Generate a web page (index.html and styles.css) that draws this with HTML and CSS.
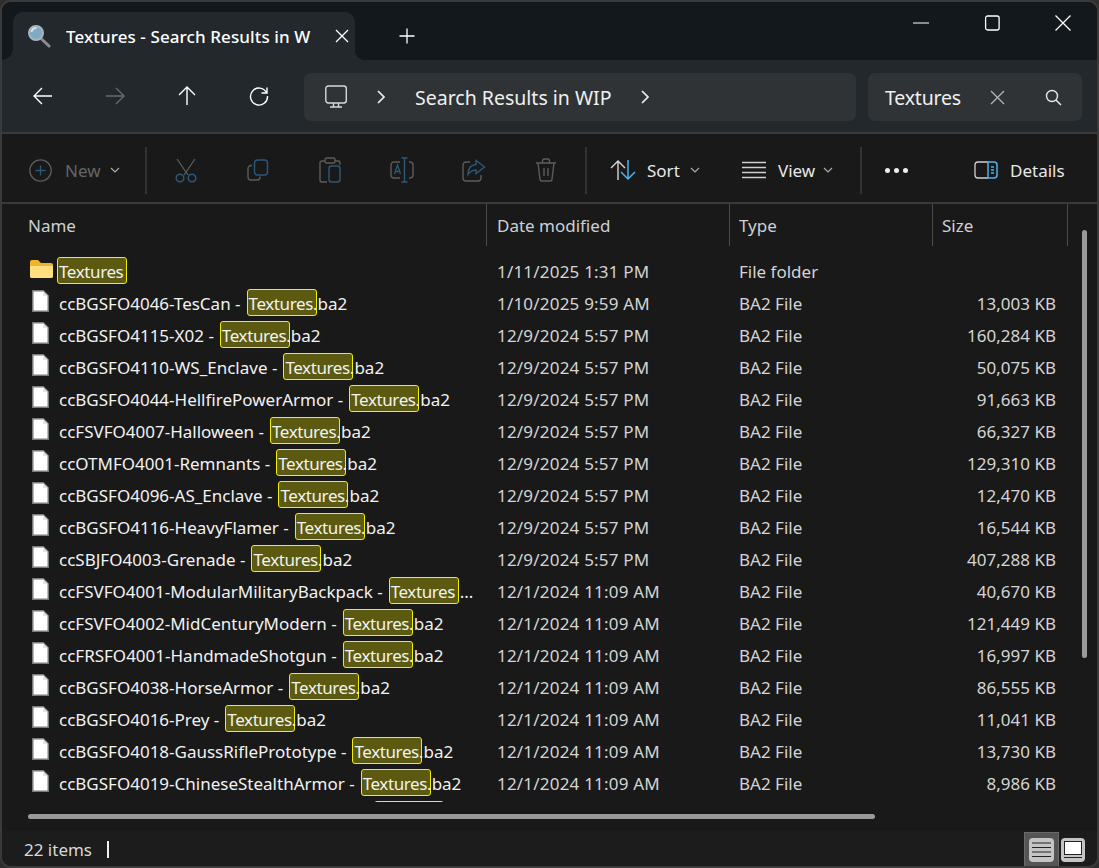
FILE: index.html
```html
<!DOCTYPE html>
<html lang="en">
<head>
    <meta charset="UTF-8">
    <meta name="viewport" content="width=device-width, initial-scale=1.0">
    <title>Textures - Search Results in WIP</title>
    <link rel="stylesheet" href="styles.css">
</head>
<body>
    <svg class="sprites" width="0" height="0">
        <symbol id="file" viewBox="0 0 17 22">
            <path d="M.75.75h10.5l5 5v15.5H.75z" fill="#fff" stroke="#7a7a7a" stroke-width="1.5"/>
            <path d="M11 1v5h5" fill="#e4e4e4"/>
        </symbol>
        <symbol id="chev" viewBox="0 0 10 6">
            <path d="M1 1l4 4 4-4" fill="none" stroke="currentColor" stroke-width="1.2"/>
        </symbol>
        <symbol id="nav-chev" viewBox="0 0 10 16">
            <path d="M2 2l6 6-6 6" fill="none" stroke="currentColor" stroke-width="1.7"/>
        </symbol>
    </svg>

    <div class="window">
        <!-- Title bar with the tab -->
        <div class="titlebar">
            <div class="tab">
                <svg class="tab-icon" width="24" height="24" viewBox="0 0 24 24">
                    <path d="M13.5 14l8.5 8" stroke="#8d8d8d" stroke-width="3" stroke-linecap="round"/>
                    <circle cx="9" cy="9" r="7" fill="#7fa9c4" stroke="#a9b4bb" stroke-width="2"/>
                    <path d="M4.5 8a5 5 0 0 1 5-4" fill="none" stroke="#cfe3ef" stroke-width="2"/>
                </svg>
                <span class="tab-title">Textures - Search Results in W</span>
                <svg class="tab-close" width="14" height="14" viewBox="0 0 14 14">
                    <path d="M1 1l12 12M13 1L1 13" stroke="#fff" stroke-width="1.3"/>
                </svg>
            </div>
            <svg class="tab-new" width="16" height="16" viewBox="0 0 16 16">
                <path d="M8 .5v15M.5 8h15" stroke="#fff" stroke-width="1.3"/>
            </svg>
            <div class="win-controls">
                <svg width="16" height="16" viewBox="0 0 16 16"><path d="M0 8h16" stroke="#fff" stroke-width="1.2"/></svg>
                <svg width="16" height="16" viewBox="0 0 16 16"><rect x="1.6" y="1" width="13.5" height="14" rx="2" fill="none" stroke="#fff" stroke-width="1.3"/></svg>
                <svg width="16" height="16" viewBox="0 0 16 16"><path d="M.5.5l15 15M15.500.5l-15 15" stroke="#fff" stroke-width="1.3"/></svg>
            </div>
        </div>

        <!-- Navigation, address and search -->
        <div class="navbar">
            <div class="nav-buttons">
                <svg width="20" height="20" viewBox="0 0 20 20"><path d="M19 10H1.500M9 2l-8 8 8 8" fill="none" stroke="#fff" stroke-width="1.4"/></svg>
                <svg width="20" height="20" viewBox="0 0 20 20"><path d="M1 10h17.500M11 2l8 8-8 8" fill="none" stroke="#666a6d" stroke-width="1.4"/></svg>
                <svg width="20" height="20" viewBox="0 0 20 20"><path d="M10 19V1.500M2 9l8-8 8 8" fill="none" stroke="#fff" stroke-width="1.4"/></svg>
                <svg width="20" height="20" viewBox="0 0 20 20"><path d="M17.500 6.500A8.500 8.500 0 1 0 18.500 10M18 1.500v5.500h-5.500" fill="none" stroke="#fff" stroke-width="1.4"/></svg>
            </div>
            <div class="address">
                <svg class="pc-icon" width="24" height="24" viewBox="0 0 24 24">
                    <rect x="1.800" y="1" width="20.500" height="17" rx="2.500" fill="none" stroke="#d8d8d8" stroke-width="1.4"/>
                    <path d="M9.500 18v3.500M14.500 18v3.500M6 22h12" fill="none" stroke="#d8d8d8" stroke-width="1.400"/>
                </svg>
                <svg class="crumb-chev" width="10" height="16"><use href="#nav-chev"/></svg>
                <span class="crumb">Search Results in WIP</span>
                <svg class="crumb-chev" width="10" height="16"><use href="#nav-chev"/></svg>
            </div>
            <div class="search">
                <span class="search-text">Textures</span>
                <svg class="search-clear" width="15" height="15" viewBox="0 0 15 15"><path d="M1 1l13 13M14 1L1 14" stroke="#b4b6b8" stroke-width="1.3"/></svg>
                <svg width="17" height="17" viewBox="0 0 17 17"><circle cx="7" cy="7" r="5.500" fill="none" stroke="#e8e8e8" stroke-width="1.400"/><path d="M11 11l5 5" stroke="#e8e8e8" stroke-width="1.500"/></svg>
            </div>
        </div>

        <!-- Command bar -->
        <div class="cmdbar">
            <div class="cmd-new">
                <svg width="23" height="23" viewBox="0 0 23 23"><circle cx="11.500" cy="11.500" r="10.700" fill="none" stroke="#5c5c5c" stroke-width="1.300"/><path d="M11.500 6.500v10M6.500 11.500h10" stroke="#2b5a78" stroke-width="1.300"/></svg>
                <span class="dim">New</span>
                <svg class="chev dim" width="10" height="6"><use href="#chev"/></svg>
            </div>
            <div class="divider divider-new"></div>
            <div class="cmd-icon">
                <svg width="24" height="25" viewBox="0 0 24 25"><path d="M3 1l11 16M21 1L10 17" fill="none" stroke="#5c5c5c" stroke-width="1.300"/><circle cx="6" cy="20" r="3.800" fill="none" stroke="#2b5a78" stroke-width="1.500"/><circle cx="18" cy="20" r="3.800" fill="none" stroke="#2b5a78" stroke-width="1.500"/></svg>
            </div>
            <div class="cmd-icon">
                <svg width="22" height="22" viewBox="0 0 22 22"><rect x="7.500" y="1" width="13" height="15" rx="3" fill="none" stroke="#2b5a78" stroke-width="1.400"/><path d="M5 6.500H4a3 3 0 0 0-3 3V18a3 3 0 0 0 3 3h6a3 3 0 0 0 3-3v-.5" fill="none" stroke="#5c5c5c" stroke-width="1.400"/></svg>
            </div>
            <div class="cmd-icon">
                <svg width="22" height="26" viewBox="0 0 22 26"><path d="M6 4H3a2 2 0 0 0-2 2v17a2 2 0 0 0 2 2h5M16 4h3a2 2 0 0 1 2 2v2" fill="none" stroke="#5c5c5c" stroke-width="1.400"/><rect x="6" y="1" width="10" height="5" rx="1.500" fill="none" stroke="#5c5c5c" stroke-width="1.400"/><rect x="10" y="9" width="11" height="16" rx="2.500" fill="none" stroke="#2b5a78" stroke-width="1.400"/></svg>
            </div>
            <div class="cmd-icon">
                <svg width="24" height="26" viewBox="0 0 24 26"><path d="M10 5H4a3 3 0 0 0-3 3v10a3 3 0 0 0 3 3h6M19 5h1a3 3 0 0 1 3 3v10a3 3 0 0 1-3 3h-1" fill="none" stroke="#5c5c5c" stroke-width="1.400"/><path d="M14.500 1v24M11.500 1h6M11.500 25h6" fill="none" stroke="#2b5a78" stroke-width="1.400"/><path d="M4.500 17l3-9 3 9M5.500 14.500h4" fill="none" stroke="#2b5a78" stroke-width="1.300"/></svg>
            </div>
            <div class="cmd-icon">
                <svg width="24" height="23" viewBox="0 0 24 23"><path d="M8 3H4a3 3 0 0 0-3 3v13a3 3 0 0 0 3 3h12a3 3 0 0 0 3-3v-3" fill="none" stroke="#5c5c5c" stroke-width="1.400"/><path d="M14 1.500L22.500 8 14 14.500V11c-4 0-6 1.500-8 4.500 0-6 3-9.500 8-10z" fill="none" stroke="#2b5a78" stroke-width="1.400"/></svg>
            </div>
            <div class="cmd-icon">
                <svg width="22" height="24" viewBox="0 0 22 24"><path d="M1 5h20M7.500 5V3a2 2 0 0 1 2-2h3a2 2 0 0 1 2 2v2M3 5l2 16a2 2 0 0 0 2 2h8a2 2 0 0 0 2-2l2-16M9 10v8M13 10v8" fill="none" stroke="#5c5c5c" stroke-width="1.400"/></svg>
            </div>
            <div class="divider divider-delete"></div>
            <div class="cmd-sort">
                <svg width="26" height="22" viewBox="0 0 26 22"><path d="M8 21V2M1 9l7-7 7 7" fill="none" stroke="#d8d8d8" stroke-width="1.400"/><path d="M18 1v19M11 13l7 7 7-7" fill="none" stroke="#4fb3ea" stroke-width="1.500"/></svg>
                <span>Sort</span>
                <svg class="chev" width="10" height="6"><use href="#chev"/></svg>
            </div>
            <div class="cmd-view">
                <svg width="24" height="18" viewBox="0 0 24 18"><path d="M0 1.500h24M0 6.500h24M0 11.500h24M0 16.500h24" stroke="#d0d0d0" stroke-width="1.300"/></svg>
                <span>View</span>
                <svg class="chev" width="10" height="6"><use href="#chev"/></svg>
            </div>
            <div class="divider"></div>
            <div class="cmd-more"><i></i><i></i><i></i></div>
            <div class="cmd-details">
                <svg width="24" height="18" viewBox="0 0 24 18"><path d="M14 1H4a3 3 0 0 0-3 3v10a3 3 0 0 0 3 3h10" fill="none" stroke="#d0d0d0" stroke-width="1.300"/><path d="M14 1h6a3 3 0 0 1 3 3v10a3 3 0 0 1-3 3h-6z" fill="none" stroke="#4fb3ea" stroke-width="1.500"/><path d="M17 6h3M17 9h3M17 12h3" stroke="#4fb3ea" stroke-width="1.300"/></svg>
                <span>Details</span>
            </div>
        </div>

        <!-- File list -->
        <div class="main">
            <div class="list-head">
                <div class="col-name">Name</div>
                <div class="col-date">Date modified</div>
                <div class="col-type">Type</div>
                <div class="col-size">Size</div>
            </div>
            <div class="list">
                <div class="row">
                    <div class="name">
                        <svg class="folder" width="23" height="18" viewBox="0 0 23 18">
                            <path d="M0 2a2 2 0 0 1 2-2h6l3 3h10a2 2 0 0 1 2 2v11a2 2 0 0 1-2 2H2a2 2 0 0 1-2-2z" fill="#f0b429"/>
                            <path d="M0 6h23v10a2 2 0 0 1-2 2H2a2 2 0 0 1-2-2z" fill="#ffdf80"/>
                        </svg>
                        <span class="hl">Textures</span>
                    </div>
                    <div class="date">1/11/2025 1:31 PM</div><div class="type">File folder</div><div class="size"></div>
                </div>
                <div class="row">
                    <div class="name"><svg class="file"><use href="#file"/></svg>ccBGSFO4046-TesCan -<span class="hl">Textures.</span>ba2</div>
                    <div class="date">1/10/2025 9:59 AM</div><div class="type">BA2 File</div><div class="size">13,003 KB</div>
                </div>
                <div class="row">
                    <div class="name"><svg class="file"><use href="#file"/></svg>ccBGSFO4115-X02 -<span class="hl">Textures.</span>ba2</div>
                    <div class="date">12/9/2024 5:57 PM</div><div class="type">BA2 File</div><div class="size">160,284 KB</div>
                </div>
                <div class="row">
                    <div class="name"><svg class="file"><use href="#file"/></svg>ccBGSFO4110-WS_Enclave -<span class="hl">Textures.</span>ba2</div>
                    <div class="date">12/9/2024 5:57 PM</div><div class="type">BA2 File</div><div class="size">50,075 KB</div>
                </div>
                <div class="row">
                    <div class="name"><svg class="file"><use href="#file"/></svg>ccBGSFO4044-HellfirePowerArmor -<span class="hl">Textures.</span>ba2</div>
                    <div class="date">12/9/2024 5:57 PM</div><div class="type">BA2 File</div><div class="size">91,663 KB</div>
                </div>
                <div class="row">
                    <div class="name"><svg class="file"><use href="#file"/></svg>ccFSVFO4007-Halloween -<span class="hl">Textures.</span>ba2</div>
                    <div class="date">12/9/2024 5:57 PM</div><div class="type">BA2 File</div><div class="size">66,327 KB</div>
                </div>
                <div class="row">
                    <div class="name"><svg class="file"><use href="#file"/></svg>ccOTMFO4001-Remnants -<span class="hl">Textures.</span>ba2</div>
                    <div class="date">12/9/2024 5:57 PM</div><div class="type">BA2 File</div><div class="size">129,310 KB</div>
                </div>
                <div class="row">
                    <div class="name"><svg class="file"><use href="#file"/></svg>ccBGSFO4096-AS_Enclave -<span class="hl">Textures.</span>ba2</div>
                    <div class="date">12/9/2024 5:57 PM</div><div class="type">BA2 File</div><div class="size">12,470 KB</div>
                </div>
                <div class="row">
                    <div class="name"><svg class="file"><use href="#file"/></svg>ccBGSFO4116-HeavyFlamer -<span class="hl">Textures.</span>ba2</div>
                    <div class="date">12/9/2024 5:57 PM</div><div class="type">BA2 File</div><div class="size">16,544 KB</div>
                </div>
                <div class="row">
                    <div class="name"><svg class="file"><use href="#file"/></svg>ccSBJFO4003-Grenade -<span class="hl">Textures.</span>ba2</div>
                    <div class="date">12/9/2024 5:57 PM</div><div class="type">BA2 File</div><div class="size">407,288 KB</div>
                </div>
                <div class="row">
                    <div class="name"><svg class="file"><use href="#file"/></svg>ccFSVFO4001-ModularMilitaryBackpack -<span class="hl">Textures</span>...</div>
                    <div class="date">12/1/2024 11:09 AM</div><div class="type">BA2 File</div><div class="size">40,670 KB</div>
                </div>
                <div class="row">
                    <div class="name"><svg class="file"><use href="#file"/></svg>ccFSVFO4002-MidCenturyModern -<span class="hl">Textures.</span>ba2</div>
                    <div class="date">12/1/2024 11:09 AM</div><div class="type">BA2 File</div><div class="size">121,449 KB</div>
                </div>
                <div class="row">
                    <div class="name"><svg class="file"><use href="#file"/></svg>ccFRSFO4001-HandmadeShotgun -<span class="hl">Textures.</span>ba2</div>
                    <div class="date">12/1/2024 11:09 AM</div><div class="type">BA2 File</div><div class="size">16,997 KB</div>
                </div>
                <div class="row">
                    <div class="name"><svg class="file"><use href="#file"/></svg>ccBGSFO4038-HorseArmor -<span class="hl">Textures.</span>ba2</div>
                    <div class="date">12/1/2024 11:09 AM</div><div class="type">BA2 File</div><div class="size">86,555 KB</div>
                </div>
                <div class="row">
                    <div class="name"><svg class="file"><use href="#file"/></svg>ccBGSFO4016-Prey -<span class="hl">Textures.</span>ba2</div>
                    <div class="date">12/1/2024 11:09 AM</div><div class="type">BA2 File</div><div class="size">11,041 KB</div>
                </div>
                <div class="row">
                    <div class="name"><svg class="file"><use href="#file"/></svg>ccBGSFO4018-GaussRiflePrototype -<span class="hl">Textures.</span>ba2</div>
                    <div class="date">12/1/2024 11:09 AM</div><div class="type">BA2 File</div><div class="size">13,730 KB</div>
                </div>
                <div class="row">
                    <div class="name"><svg class="file"><use href="#file"/></svg>ccBGSFO4019-ChineseStealthArmor -<span class="hl">Textures.</span>ba2</div>
                    <div class="date">12/1/2024 11:09 AM</div><div class="type">BA2 File</div><div class="size">8,986 KB</div>
                </div>
                <div class="row row-cut">
                    <div class="name"><svg class="file"><use href="#file"/></svg><span class="hl"></span></div>
                </div>
            </div>
            <div class="hscroll"></div>
            <div class="vscroll"></div>
        </div>

        <!-- Status bar -->
        <div class="statusbar">
            <span>22 items</span>
            <span class="status-caret"></span>
            <div class="view-toggle">
                <div class="toggle-btn active">
                    <svg width="25" height="24" viewBox="0 0 25 24"><rect width="25" height="24" rx="4" fill="#c4c4c4"/><path d="M3 5h19M3 9.500h19M3 14h19M3 18.500h19" stroke="#222" stroke-width="1.200"/></svg>
                </div>
                <div class="toggle-btn">
                    <svg width="24" height="24" viewBox="0 0 24 24"><rect width="24" height="24" rx="4" fill="#c4c4c4"/><rect x="3.500" y="3.500" width="17" height="13" fill="#fff" stroke="#222"/><path d="M3 19.500h18" stroke="#222" stroke-width="1.200"/></svg>
                </div>
            </div>
        </div>
    </div>
</body>
</html>
```

FILE: styles.css
```css
* {
    box-sizing: border-box;
}
html, body {
    height: 100%;
}
body {
    margin: 0;
    background: #2e2e2e;
    font-family: "Noto Sans", "Open Sans", sans-serif;
    font-size: 17px;
    color: #e8e8e8;
    overflow: hidden;
}
.sprites {
    position: absolute;
}
.window {
    height: 868px;
    display: flex;
    flex-direction: column;
    border: 2px solid #3a3a3a;
    border-radius: 11px;
    background: #191919;
    overflow: hidden;
}

/* Title bar */
.titlebar {
    height: 58px;
    flex: none;
    display: flex;
    align-items: flex-start;
    background: #13181c;
}
.tab {
    position: relative;
    width: 342px;
    height: 48px;
    margin: 10px 0 0 11px;
    display: flex;
    align-items: center;
    background: #23282c;
    border-radius: 10px 10px 0 0;
}
.tab::before {
    content: "";
    position: absolute;
    left: -11px;
    bottom: 0;
    width: 11px;
    height: 11px;
    background: radial-gradient(circle at 0 0, transparent 10.500px, #23282c 11px);
}
.tab::after {
    content: "";
    position: absolute;
    right: -9px;
    bottom: 0;
    width: 9px;
    height: 9px;
    background: radial-gradient(circle at 100% 0, transparent 8.500px, #23282c 9px);
}
.tab-icon {
    margin-left: 14px;
    flex: none;
}
.tab-title {
    width: 246px;
    margin-left: 15px;
    overflow: hidden;
    white-space: nowrap;
    color: #fff;
    font-weight: 500;
    letter-spacing: 0.1px;
}
.tab-close {
    margin-left: 23px;
}
.tab-new {
    margin: 26px 0 0 44px;
}
.win-controls {
    margin-left: auto;
    margin-right: 26px;
    margin-top: 13px;
    display: flex;
    gap: 55px;
}

/* Navigation */
.navbar {
    height: 72px;
    flex: none;
    display: flex;
    align-items: center;
    background: #23282c;
}
.nav-buttons {
    width: 302px;
    padding-left: 31px;
    display: flex;
    gap: 52px;
}
.address {
    width: 552px;
    height: 48px;
    margin-top: 2px;
    display: flex;
    align-items: center;
    background: #2f3336;
    border-radius: 7px;
    font-size: 19.5px;
    color: #f0f0f0;
}
.pc-icon {
    margin-left: 20px;
}
.address .crumb-chev {
    color: #f0f0f0;
    margin-left: 28px;
}
.crumb {
    margin-left: 29px;
    width: 199px;
    white-space: nowrap;
}
.address .crumb + .crumb-chev {
    margin-left: 26px;
}
.search {
    width: 214px;
    height: 48px;
    margin-top: 2px;
    margin-left: 12px;
    padding-left: 17px;
    display: flex;
    align-items: center;
    background: #2f3336;
    border-radius: 7px;
    font-size: 19.5px;
    color: #f0f0f0;
}
.search-text {
    width: 105px;
    letter-spacing: -0.2px;
}
.search-clear {
    margin-right: 40px;
}

.cmdbar {
    height: 70px;
    flex: none;
    display: flex;
    align-items: center;
    padding-top: 4px;
    background: #191919;
    border-top: 2px solid #3a3a3a;
}
.cmd-new,
.cmd-sort,
.cmd-view,
.cmd-details {
    display: flex;
    align-items: center;
}
.cmd-new {
    width: 143px;
    padding-left: 27px;
}
.cmd-new span {
    margin-left: 13px;
    margin-right: 9px;
}
.dim {
    color: #666;
}
.divider {
    width: 2px;
    height: 47px;
    background: #333;
    flex: none;
}
.divider-new {
    margin-right: 3px;
}
.cmd-icon {
    width: 72px;
    display: flex;
    justify-content: center;
    flex: none;
}
.divider-delete {
    margin-left: 3px;
}
.cmd-sort {
    width: 155px;
    padding-left: 23px;
}
.cmd-sort span {
    margin: 0 10px 0 11px;
}
.chev {
    color: #aaa;
}
.cmd-view {
    width: 118px;
}
.cmd-view span {
    margin: 0 8px 0 12px;
}
.cmd-more {
    width: 112px;
    padding-left: 23px;
    display: flex;
    gap: 4px;
}
.cmd-more i {
    width: 5px;
    height: 5px;
    border-radius: 50%;
    background: #eee;
}
.cmd-details span {
    margin-left: 12px;
}

/* File list */
.main {
    position: relative;
    flex: 1;
    display: flex;
    flex-direction: column;
    border-top: 2px solid #3a3a3a;
}
.list-head {
    height: 42px;
    flex: none;
    display: grid;
    grid-template-columns: 485px 243px 203px 135px;
    color: #cdd1d4;
}
.list-head > div {
    padding-top: 10px;
    border-right: 1px solid #4a4a4a;
    padding-left: 10px;
}
.list-head .col-name {
    padding-left: 26px;
}
.list-head .col-type {
    padding-left: 9px;
}
.list-head .col-size {
    padding-left: 9px;
}
.list {
    height: 548px;
    margin-top: 8px;
    flex: none;
    overflow: hidden;
}
.row {
    height: 32px;
    display: grid;
    grid-template-columns: 485px 243px 203px 123px;
    align-items: center;
    color: #d4d4d4;
    line-height: 24px;
}
.row > div {
    padding: 4px 0 0 10px;
    white-space: nowrap;
}
.row .date {
    letter-spacing: 0.2px;
}
.row .type {
    padding-left: 9px;
}
.row .name {
    align-self: stretch;
    padding-left: 30px;
    display: flex;
    align-items: center;
    color: #f2f2f2;
    overflow: hidden;
}
.row .size {
    text-align: right;
}
.file {
    width: 17px;
    height: 22px;
    margin: -6px 10px 0 0;
    flex: none;
}
.folder {
    margin: -6px 4px 0 -2px;
    flex: none;
}
.hl {
    width: 70px;
    height: 27px;
    margin: -3px 1px 0 6px;
    padding: 3px 0 0 1px;
    flex: none;
    display: inline-flex;
    align-items: center;
    background: #5c5a10;
    border: 1px solid #f0f000;
    border-radius: 3px;
    color: #f2f2f2;
    letter-spacing: -0.4px;
}
.folder + .hl {
    margin-left: 0;
}
.row-cut .hl {
    margin-left: 315px;
}
.hscroll {
    width: 847px;
    height: 5px;
    margin: 12px 0 10px 26px;
    flex: none;
    background: #9a9a9a;
    border-radius: 3px;
}
.vscroll {
    position: absolute;
    right: 10px;
    top: 26px;
    width: 5px;
    height: 428px;
    background: #9a9a9a;
    border-radius: 3px;
}

/* Status bar */
.statusbar {
    height: 35px;
    flex: none;
    display: flex;
    align-items: center;
    padding: 2px 0 0 22px;
    background: #1c1c1c;
    color: #d8d8d8;
}
.status-caret {
    width: 2px;
    height: 17px;
    margin-left: 15px;
    background: #eee;
}
.view-toggle {
    margin-left: auto;
    margin-right: 11px;
    display: flex;
    align-items: center;
    height: 100%;
}
.toggle-btn {
    width: 27px;
    height: 35px;
    display: flex;
    align-items: center;
    justify-content: center;
}
.toggle-btn.active {
    width: 35px;
    background: #555;
    border: 1px solid #6a6a6a;
}
```
